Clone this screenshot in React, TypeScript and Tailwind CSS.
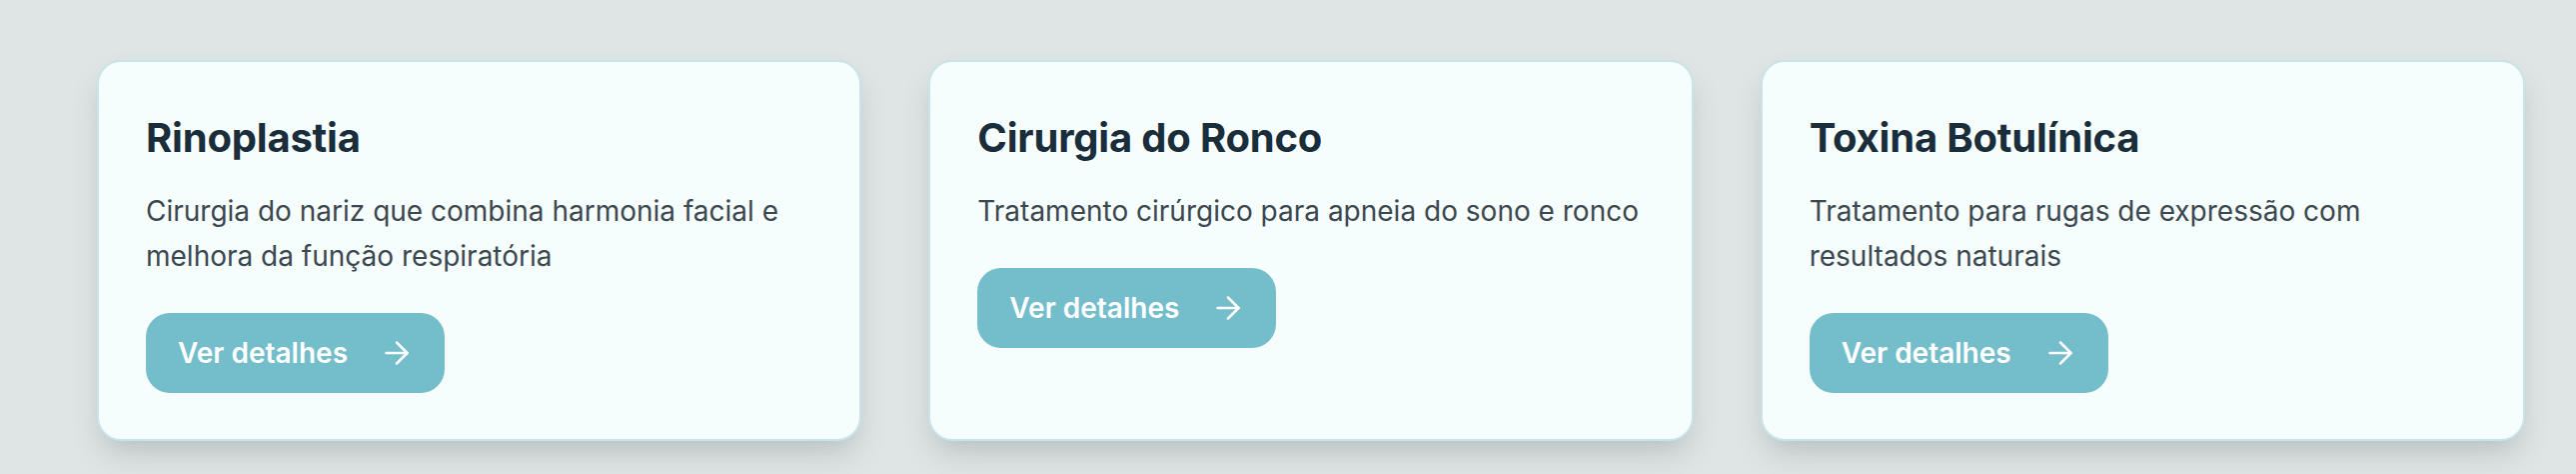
import { ArrowRight } from "lucide-react";

type Servico = {
  titulo: string;
  descricao: string;
};

const SERVICOS: Servico[] = [
  {
    titulo: "Rinoplastia",
    descricao: "Cirurgia do nariz que combina harmonia facial e melhora da função respiratória",
  },
  {
    titulo: "Cirurgia do Ronco",
    descricao: "Tratamento cirúrgico para apneia do sono e ronco",
  },
  {
    titulo: "Toxina Botulínica",
    descricao: "Tratamento para rugas de expressão com resultados naturais",
  },
];

function ServicoCard({ titulo, descricao }: Servico) {
  return (
    <div className="flex flex-col items-start rounded-[24px] border-2 border-[#c8e4e9] bg-[#f6fdfd] px-[47px] pt-[51px] pb-[46px] shadow-[0_16px_30px_-6px_rgba(60,80,85,0.25)]">
      <h3 className="text-[40px] font-bold leading-[50px] tracking-[-0.2px] text-[#1a2d3a]">{titulo}</h3>
      <p className="mt-[26px] text-[28px] leading-[45px] text-[#3c4850]">{descricao}</p>
      <button className="mt-[34px] flex h-[80px] items-center rounded-[24px] bg-[#74bdca] pl-[32px] pr-[30px] text-[28px] font-semibold text-white">
        <span>Ver detalhes</span>
        <ArrowRight className="ml-[31px] h-[36px] w-[36px]" strokeWidth={1.7} />
      </button>
    </div>
  );
}

export default function App() {
  return (
    <div
      className="min-h-[474px] w-full bg-[#dfe5e5] pt-[60px] pl-[97px]"
      style={{ fontFamily: "Inter, 'Noto Sans', sans-serif" }}
    >
      <div className="grid w-[2430px] grid-cols-3 gap-x-[67px]">
        {SERVICOS.map((s) => (
          <ServicoCard key={s.titulo} {...s} />
        ))}
      </div>
    </div>
  );
}
